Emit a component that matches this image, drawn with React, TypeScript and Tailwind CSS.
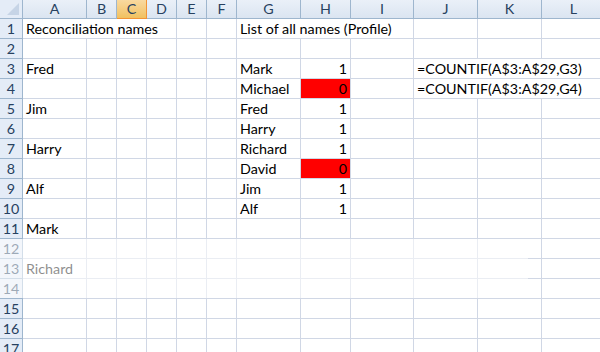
import React from "react";

const cols = [
  { k: "A", w: 64 },
  { k: "B", w: 30 },
  { k: "C", w: 30 },
  { k: "D", w: 30 },
  { k: "E", w: 30 },
  { k: "F", w: 30 },
  { k: "G", w: 64 },
  { k: "H", w: 50 },
  { k: "I", w: 63 },
  { k: "J", w: 64 },
  { k: "K", w: 64 },
  { k: "L", w: 64 },
];

type Cell = { text?: string; span?: number; align?: "left" | "right"; red?: boolean };

const data: Record<number, Record<string, Cell>> = {
  1: { A: { text: "Reconciliation names", span: 4 }, G: { text: "List of all names (Profile)", span: 3 } },
  3: { A: { text: "Fred" }, G: { text: "Mark" }, H: { text: "1", align: "right" }, J: { text: "=COUNTIF(A$3:A$29,G3)", span: 3 } },
  4: { G: { text: "Michael" }, H: { text: "0", align: "right", red: true }, J: { text: "=COUNTIF(A$3:A$29,G4)", span: 3 } },
  5: { A: { text: "Jim" }, G: { text: "Fred" }, H: { text: "1", align: "right" } },
  6: { G: { text: "Harry" }, H: { text: "1", align: "right" } },
  7: { A: { text: "Harry" }, G: { text: "Richard" }, H: { text: "1", align: "right" } },
  8: { G: { text: "David" }, H: { text: "0", align: "right", red: true } },
  9: { A: { text: "Alf" }, G: { text: "Jim" }, H: { text: "1", align: "right" } },
  10: { G: { text: "Alf" }, H: { text: "1", align: "right" } },
  11: { A: { text: "Mark" } },
  13: { A: { text: "Richard" } },
};

function Row({ n }: { n: number }) {
  const row = data[n] || {};
  const cells: React.ReactNode[] = [];
  let i = 0;
  while (i < cols.length) {
    const c = cols[i];
    const cell = row[c.k];
    const span = cell?.span ?? 1;
    let w = 0;
    for (let j = i; j < i + span && j < cols.length; j++) w += cols[j].w;
    cells.push(
      <div
        key={c.k}
        style={{ width: w }}
        className={`box-border h-[20px] shrink-0 border-b border-r border-[#d0d7e5] flex items-end whitespace-nowrap overflow-visible pb-[1px] ${
          cell?.red ? "bg-[#ff0000]" : "bg-white"
        } ${cell?.align === "right" ? "justify-end pr-[3px]" : "pl-[3px]"}`}
      >
        {cell?.text ? <span className="leading-[17px]">{cell.text}</span> : null}
      </div>
    );
    i += span;
  }
  return (
    <div className="flex h-[20px]">
      <div className="box-border h-[20px] w-[23px] shrink-0 border-b border-r border-[#9eb6ce] bg-[#e4ecf7] flex items-end justify-center pb-[1px] text-[#27415f]">
        <span className="leading-[17px]">{n}</span>
      </div>
      {cells}
    </div>
  );
}

export default function App() {
  return (
    <div
      className="relative h-[352px] w-[600px] overflow-hidden bg-white text-[14.3px] text-black"
      style={{ fontFamily: "Lato, 'Open Sans', sans-serif" }}
    >
      <div className="flex h-[19px]">
        <div className="relative box-border h-[19px] w-[23px] shrink-0 border-b border-r border-[#9eb6ce] bg-[#e4ecf7]">
          <svg className="absolute bottom-[3px] right-[3px]" width="12" height="12" viewBox="0 0 12 12">
            <polygon points="12,0 12,12 0,12" fill="#c6d4e6" />
          </svg>
        </div>
        {cols.map((c) => (
          <div
            key={c.k}
            style={{ width: c.w }}
            className={`box-border h-[19px] shrink-0 flex items-center justify-center border-b border-r leading-[18px] ${
              c.k === "C"
                ? "border-[#f29436] bg-gradient-to-b from-[#f9d99f] to-[#f1c15f] text-[#27415f]"
                : "border-[#9eb6ce] bg-gradient-to-b from-[#eaf0f8] to-[#dbe5f1] text-[#27415f]"
            }`}
          >
            {c.k}
          </div>
        ))}
      </div>
      {Array.from({ length: 17 }, (_, k) => (
        <Row key={k + 1} n={k + 1} />
      ))}
      <div className="pointer-events-none absolute left-0 top-[239px] h-[59px] w-[528px] bg-white/55" />
    </div>
  );
}
